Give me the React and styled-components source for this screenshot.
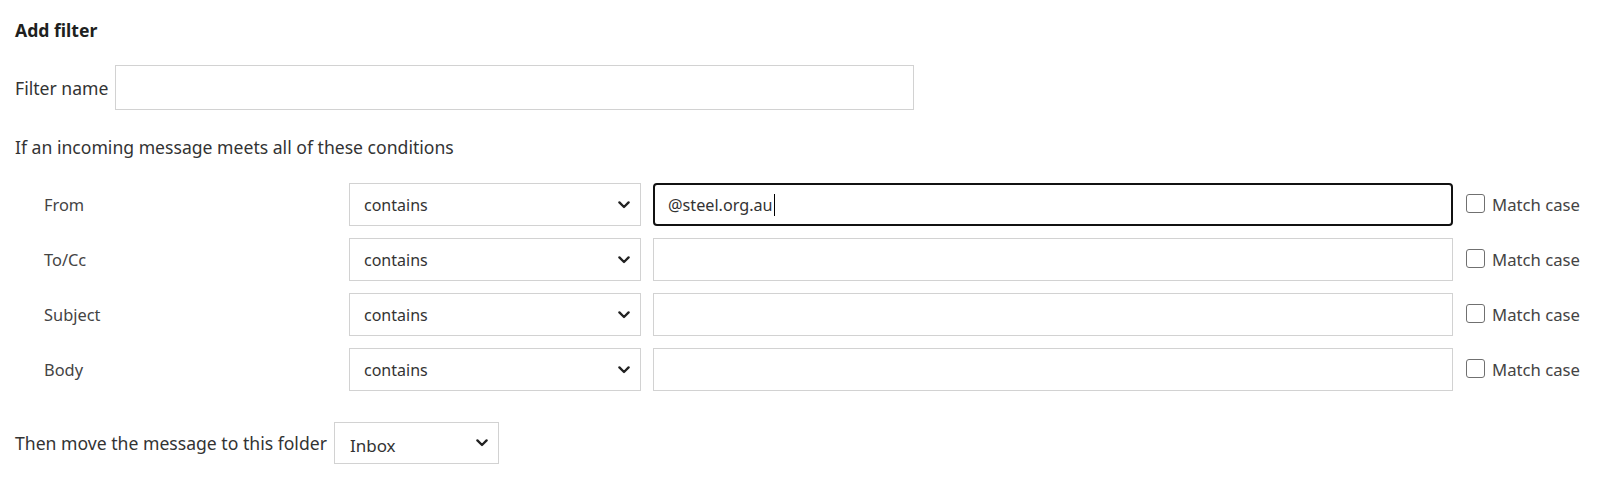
import React from "react";
import styled, { createGlobalStyle } from "styled-components";

const GlobalStyle = createGlobalStyle`
  body {
    margin: 0;
    background: #ffffff;
    font-family: "Noto Sans", "Open Sans", sans-serif;
    color: #333333;
  }
`;

const Page = styled.div`
  display: flex;
  flex-direction: column;
  padding: 18px 0 0 15px;
`;

const Title = styled.div`
  font-size: 17.6px;
  font-weight: 700;
  line-height: 24px;
  color: #201f1e;
`;

const FieldRow = styled.div`
  display: flex;
  align-items: center;
  gap: 7px;
  margin-top: ${(p) => p.top || 0}px;
`;

const Label = styled.span`
  font-size: 17.6px;
  line-height: 24px;
  white-space: nowrap;
`;

const TextBox = styled.div`
  box-sizing: border-box;
  display: flex;
  align-items: center;
  width: ${(p) => p.width}px;
  height: ${(p) => p.height || 43}px;
  padding-left: 13px;
  border: ${(p) => (p.focused ? "2px solid #111" : "1px solid #d2d2d2")};
  border-radius: ${(p) => (p.focused ? "4px" : "0")};
  background: #ffffff;
  font-size: 16.2px;
  color: #333333;
`;

const Caret = styled.span`
  display: inline-block;
  width: 1px;
  height: 22px;
  margin-left: 1px;
  background: #000;
`;

const Intro = styled.div`
  margin-top: 25px;
  font-size: 17.6px;
  line-height: 24px;
`;

const Conditions = styled.div`
  display: flex;
  flex-direction: column;
  gap: 12px;
  margin-top: 24px;
`;

const ConditionRow = styled.div`
  display: flex;
  align-items: center;
  height: 43px;
`;

const ConditionLabel = styled.span`
  box-sizing: border-box;
  width: 334px;
  padding-left: 29px;
  font-size: 16.4px;
  color: #444444;
`;

const Select = styled.div`
  box-sizing: border-box;
  display: flex;
  align-items: center;
  justify-content: space-between;
  width: ${(p) => p.width}px;
  height: ${(p) => p.height || 43}px;
  padding: ${(p) => p.pad || "0 10px 0 14px"};
  border: 1px solid #d2d2d2;
  background: #ffffff;
  font-size: ${(p) => p.size || 16}px;
  color: #333333;
  flex-shrink: 0;
`;

const SelectText = styled.span`
  padding-top: ${(p) => p.drop || 0}px;
`;

const Spacer = styled.div`
  width: ${(p) => p.w}px;
  flex-shrink: 0;
`;

const MatchCase = styled.label`
  display: flex;
  align-items: center;
  gap: 7px;
  font-size: 16.7px;
  color: #444444;
`;

const Box = styled.span`
  box-sizing: border-box;
  width: 19px;
  height: 19px;
  margin-top: -3px;
  border: 1px solid #707070;
  border-radius: 3px;
  background: #fff;
`;

const MoveRow = styled(FieldRow)`
  margin-top: 31px;
`;

function Chevron() {
  return (
    <svg width="12" height="8" viewBox="0 0 12 8">
      <path
        d="M1.4 1.4 L6 6 L10.6 1.4"
        fill="none"
        stroke="#222"
        strokeWidth="2.3"
        strokeLinecap="round"
        strokeLinejoin="round"
      />
    </svg>
  );
}

const conditions = [
  { name: "From", value: "@steel.org.au", focused: true },
  { name: "To/Cc" },
  { name: "Subject" },
  { name: "Body" },
];

export default function App() {
  return (
    <>
      <GlobalStyle />
      <Page>
        <Title>Add filter</Title>
        <FieldRow top={23}>
          <Label>Filter name</Label>
          <TextBox width={799} height={45} />
        </FieldRow>
        <Intro>If an incoming message meets all of these conditions</Intro>
        <Conditions>
          {conditions.map((c) => (
            <ConditionRow key={c.name}>
              <ConditionLabel>{c.name}</ConditionLabel>
              <Select width={292}>
                <SelectText>contains</SelectText>
                <Chevron />
              </Select>
              <Spacer w={12} />
              <TextBox width={800} focused={c.focused}>
                {c.value}
                {c.focused && <Caret />}
              </TextBox>
              <Spacer w={13} />
              <MatchCase>
                <Box />
                Match case
              </MatchCase>
            </ConditionRow>
          ))}
        </Conditions>
        <MoveRow>
          <Label>Then move the message to this folder</Label>
          <Select width={165} height={42} size={17} pad="0 10px 0 15px">
            <SelectText drop={4}>Inbox</SelectText>
            <Chevron />
          </Select>
        </MoveRow>
      </Page>
    </>
  );
}
